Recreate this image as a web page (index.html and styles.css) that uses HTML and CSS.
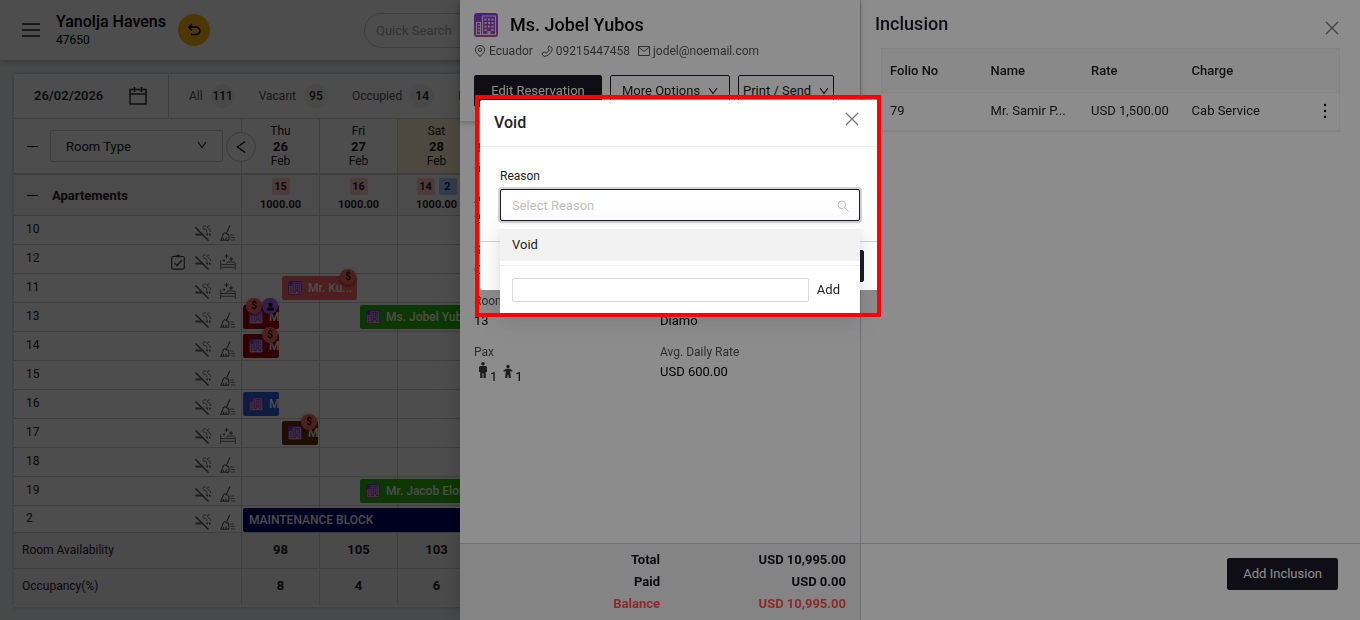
FILE: index.html
```html
<!DOCTYPE html>
<html lang="en">
<head>
  <meta charset="UTF-8">
  <meta name="viewport" content="width=device-width, initial-scale=1">
  <title>Yanolja Havens - Stay View</title>
  <link rel="stylesheet" href="styles.css">
</head>
<body>
  <!-- Shared icons -->
  <svg class="sprite" aria-hidden="true">
    <defs>
      <linearGradient id="purple" x1="0" y1="0" x2="0" y2="1">
        <stop offset="0" stop-color="#7a3ce0"/>
        <stop offset="1" stop-color="#b0489c"/>
      </linearGradient>
    </defs>
    <symbol id="i-building" viewBox="0 0 24 24">
      <rect width="24" height="24" rx="3" fill="url(#purple)"/>
      <path d="M8.500 21.500V3h13v18.500M2.500 21.500V9.500h4v12M2 21.500h20" fill="none" stroke="#e9d6f5" stroke-width="1.100"/>
      <path d="M10.500 5.500h2v2h-2zM14 5.500h2v2h-2zM17.500 5.500h2v2h-2zM10.500 9h2v2h-2zM14 9h2v2h-2zM17.500 9h2v2h-2zM10.500 12.500h2v2h-2zM14 12.500h2v2h-2zM17.500 12.500h2v2h-2zM10.500 16h2v2h-2zM17.500 16h2v2h-2zM13.500 18h3v3.500h-3zM4 11.500h1.500v1.500H4zM4 14.500h1.500V16H4zM4 17.500h1.500V19H4z" fill="#e9d6f5"/>
    </symbol>
    <symbol id="i-nosmoke" viewBox="0 0 16 16">
      <path d="M.5 2.500l13 13" fill="none" stroke="#444" stroke-width="1.200"/>
      <path d="M.5 8.500h7l2 2h-9zM10.500 8.500h2.500v2h-1zM14 8.500h1.500v2H14z" fill="#666"/>
      <path d="M11 1C8.500.5 7 2 8 3.500s3 .5 3.500 1.500-.5 2 1 2.500M14.500 1c-2 0-3 1-2 2s3 1 3 4" fill="none" stroke="#777" stroke-width="1"/>
    </symbol>
    <symbol id="i-broom" viewBox="0 0 16 16">
      <path d="M10 .5L6.500 8M4 7.500l4.500 2M3.500 8C3 11 2 13 .8 15.300h7.700c.6-2 .7-4 0-5.800M3.500 15v-2M6 15v-2.500" fill="none" stroke="#555" stroke-width="1.100"/>
      <path d="M10 10h4M10.800 12.500h4M10.800 15h4.500" stroke="#888" stroke-width="1.200"/>
    </symbol>
    <symbol id="i-bed" viewBox="0 0 16 16">
      <path d="M.7 6v9.800M.7 13.300h14.600v2.500M15.300 13.300V10q0-2-2-2H8q-1 0-1 1.300v1.200H.7M7 10.500h8" fill="none" stroke="#777" stroke-width="1"/>
      <path d="M6.500 0v4M4.500 2h4M11 3v4M9 5h4M4 5.500v2M3 6.500h2" stroke="#555" stroke-width="1"/>
    </symbol>
    <symbol id="i-task" viewBox="0 0 16 16">
      <rect x="1.700" y="2.500" width="12.600" height="12.600" rx="1.500" fill="none" stroke="#444" stroke-width="1.200"/>
      <path d="M5 2.500h6M6.500 1.300h3" stroke="#444" stroke-width="1.300"/>
      <path d="M4.500 9l2.500 2.500 5-5.500" fill="none" stroke="#444" stroke-width="1.300"/>
    </symbol>
    <symbol id="i-down" viewBox="0 0 10 10">
      <path d="M1 2l4 5.500L9 2" fill="none" stroke="currentColor" stroke-width="1.100"/>
    </symbol>
    <symbol id="i-close" viewBox="0 0 14 14">
      <path d="M1 1l12 12M13 1L1 13" fill="none" stroke="currentColor" stroke-width="1.300"/>
    </symbol>
    <symbol id="i-user" viewBox="0 0 10 10">
      <circle cx="5" cy="2.800" r="2.300"/>
      <path d="M4 4h2v1.500H4zM1 9.500V8q0-2 2-2h4q2 0 2 2v1.500z"/>
    </symbol>
  </svg>

  <div class="app">
    <header class="topbar">
      <button type="button" class="menu-btn" aria-label="Menu"><span></span><span></span><span></span></button>
      <div class="hotel">
        <h1>Yanolja Havens</h1>
        <p>47650</p>
      </div>
      <button type="button" class="back-btn" aria-label="Back">
        <svg width="14" height="14" viewBox="0 0 14 14"><path d="M5 1L2 4.200 5 7.500M2 4.200h7.200a3.600 3.600 0 0 1 0 7.300H4" fill="none" stroke="#000" stroke-width="1.700"/></svg>
      </button>
      <input type="text" class="quick-search" placeholder="Quick Search" aria-label="Quick Search">
    </header>

    <main class="board">
      <div class="filters">
        <div class="date-box">
          <span>26/02/2026</span>
          <svg width="18" height="18" viewBox="0 0 18 18"><path d="M1 2.500h16V17H1zM1 7h16M5.500 0v5M12.500 0v5" fill="none" stroke="#333" stroke-width="1.500"/></svg>
        </div>
        <div class="tab">All <b class="active">111</b></div>
        <div class="tab">Vacant <b>95</b></div>
        <div class="tab">Occupied <b>14</b></div>
        <div class="tab">Reserved</div>
      </div>

      <table class="calendar">
        <colgroup><col class="col-room"><col class="col-day"><col class="col-day"><col class="col-day"><col></colgroup>
        <thead>
          <tr class="days">
            <th>
              <div class="room-head">
                <i class="minus"></i>
                <div class="select-wrap">
                  <select aria-label="Room Type"><option>Room Type</option></select>
                  <svg width="10" height="10"><use href="#i-down"/></svg>
                </div>
              </div>
              <button type="button" class="prev-btn" aria-label="Previous">
                <svg width="10" height="14" viewBox="0 0 10 14"><path d="M9 1.500L1.500 7 9 12.500" fill="none" stroke="#000" stroke-width="1.400"/></svg>
              </button>
            </th>
            <th>Thu<b>26</b>Feb</th>
            <th>Fri<b>27</b>Feb</th>
            <th class="weekend">Sat<b>28</b>Feb</th>
            <th></th>
          </tr>
          <tr class="group">
            <th><div class="room-head"><i class="minus"></i><span>Apartements</span></div></th>
            <th><em>15</em><p>1000.00</p></th>
            <th><em>16</em><p>1000.00</p></th>
            <th><em>14</em><em class="blue">2</em><p>1000.00</p></th>
            <th></th>
          </tr>
        </thead>
        <tbody>
          <tr>
            <td><div class="room"><span>10</span><svg><use href="#i-nosmoke"/></svg><svg><use href="#i-broom"/></svg></div></td>
            <td></td><td></td><td></td><td></td>
          </tr>
          <tr>
            <td><div class="room"><span>12</span><svg><use href="#i-task"/></svg><svg><use href="#i-nosmoke"/></svg><svg><use href="#i-bed"/></svg></div></td>
            <td></td><td></td><td></td><td></td>
          </tr>
          <tr>
            <td><div class="room"><span>11</span><svg><use href="#i-nosmoke"/></svg><svg><use href="#i-bed"/></svg></div></td>
            <td><div class="booking mid day salmon"><svg><use href="#i-building"/></svg><span>Mr. Ku...</span><div class="marks"><i>$</i></div></div></td>
            <td></td><td></td><td></td>
          </tr>
          <tr>
            <td><div class="room"><span>13</span><svg><use href="#i-nosmoke"/></svg><svg><use href="#i-broom"/></svg></div></td>
            <td><div class="booking half maroon"><svg><use href="#i-building"/></svg><span>M</span><div class="marks"><i>$</i><i class="vip"><svg><use href="#i-user"/></svg></i></div></div></td>
            <td><div class="booking mid long green"><svg><use href="#i-building"/></svg><span>Ms. Jobel Yubos</span></div></td>
            <td></td><td></td>
          </tr>
          <tr>
            <td><div class="room"><span>14</span><svg><use href="#i-nosmoke"/></svg><svg><use href="#i-broom"/></svg></div></td>
            <td><div class="booking half maroon"><svg><use href="#i-building"/></svg><span>M</span><div class="marks"><i>$</i></div></div></td>
            <td></td><td></td><td></td>
          </tr>
          <tr>
            <td><div class="room"><span>15</span><svg><use href="#i-nosmoke"/></svg><svg><use href="#i-broom"/></svg></div></td>
            <td></td><td></td><td></td><td></td>
          </tr>
          <tr>
            <td><div class="room"><span>16</span><svg><use href="#i-nosmoke"/></svg><svg><use href="#i-broom"/></svg></div></td>
            <td><div class="booking half blue"><svg><use href="#i-building"/></svg><span>M</span></div></td>
            <td></td><td></td><td></td>
          </tr>
          <tr>
            <td><div class="room"><span>17</span><svg><use href="#i-nosmoke"/></svg><svg><use href="#i-bed"/></svg></div></td>
            <td><div class="booking mid half brown"><svg><use href="#i-building"/></svg><span>M</span><div class="marks"><i>$</i></div></div></td>
            <td></td><td></td><td></td>
          </tr>
          <tr>
            <td><div class="room"><span>18</span><svg><use href="#i-nosmoke"/></svg><svg><use href="#i-broom"/></svg></div></td>
            <td></td><td></td><td></td><td></td>
          </tr>
          <tr>
            <td><div class="room"><span>19</span><svg><use href="#i-nosmoke"/></svg><svg><use href="#i-broom"/></svg></div></td>
            <td></td>
            <td><div class="booking mid long green"><svg><use href="#i-building"/></svg><span>Mr. Jacob Elordi</span></div></td>
            <td></td><td></td>
          </tr>
          <tr class="last">
            <td><div class="room"><span>2</span><svg><use href="#i-nosmoke"/></svg><svg><use href="#i-broom"/></svg></div></td>
            <td><div class="booking block"><span>MAINTENANCE BLOCK</span></div></td>
            <td></td><td></td><td></td>
          </tr>
        </tbody>
        <tfoot>
          <tr><th>Room Availability</th><td>98</td><td>105</td><td>103</td><td></td></tr>
          <tr><th>Occupancy(%)</th><td>8</td><td>4</td><td>6</td><td></td></tr>
        </tfoot>
      </table>
    </main>
  </div>

  <div class="mask"></div>

  <!-- Reservation drawer -->
  <aside class="drawer">
    <section class="guest">
      <header class="guest-head">
        <h2><svg width="24" height="24"><use href="#i-building"/></svg>Ms. Jobel Yubos</h2>
        <ul class="contact">
          <li><svg width="12" height="12" viewBox="0 0 12 12"><path d="M6 11.300C3 8.800 1.300 7 1.300 4.800a4.700 4.300 0 0 1 9.400 0C10.700 7 9 8.800 6 11.300z" fill="none" stroke="currentColor"/><circle cx="6" cy="4.800" r="1.700" fill="none" stroke="currentColor"/></svg>Ecuador</li>
          <li><svg width="12" height="12" viewBox="0 0 12 12"><path d="M8.300.8l2.900 2.400c.2 4-4.200 8.200-8.200 8.200L.8 8.800l2.400-1.900 1.900 1.200c1.300-.6 2.300-1.600 3-3L6.800 3.200z" fill="none" stroke="currentColor"/></svg>09215447458</li>
          <li><svg width="12" height="12" viewBox="0 0 12 12"><path d="M.5 1.500h11v9H.5zM.5 2l5.500 4.500L11.500 2" fill="none" stroke="currentColor"/></svg>jodel@noemail.com</li>
        </ul>
        <div class="actions">
          <button type="button" class="btn primary edit">Edit Reservation</button>
          <button type="button" class="btn more">More Options <svg width="10" height="10"><use href="#i-down"/></svg></button>
          <button type="button" class="btn print">Print / Send <svg width="10" height="10"><use href="#i-down"/></svg></button>
        </div>
      </header>
      <dl class="details">
        <div><dt>Booking</dt><dd>6</dd></div>
        <div></div>
        <div><dt>Arrival</dt><dd>27</dd></div>
        <div></div>
        <div><dt>Status</dt><dd>Confirmed</dd></div>
        <div></div>
        <div><dt>Room</dt><dd>13</dd></div>
        <div><dt>Rate Type</dt><dd>Diamo</dd></div>
        <div>
          <dt>Pax</dt>
          <dd class="pax">
            <svg width="12" height="16" viewBox="0 0 12 16"><circle cx="6" cy="1.800" r="1.800"/><path d="M3.500 4h5Q10 4 10 5.500V10H8.800v6H6.500v-5h-1v5H3.200v-6H2V5.500Q2 4 3.500 4z"/></svg>1
            <svg width="12" height="16" viewBox="0 0 12 16"><circle cx="6" cy="4.500" r="1.700"/><path d="M4.300 6.800h3.400l3 1.700-.6 1.300-2-.8.800 7H6.800l-.4-3h-.8l-.4 3H3.100l.8-7-2 .8-.6-1.300z"/></svg>1
          </dd>
        </div>
        <div><dt>Avg. Daily Rate</dt><dd>USD 600.00</dd></div>
      </dl>
      <table class="totals">
        <tr><th>Total</th><td>USD 10,995.00</td></tr>
        <tr><th>Paid</th><td>USD 0.00</td></tr>
        <tr class="balance"><th>Balance</th><td>USD 10,995.00</td></tr>
      </table>
    </section>

    <section class="inclusion">
      <header class="inclusion-head">
        <h2>Inclusion</h2>
        <button type="button" class="icon-btn" aria-label="Close"><svg width="14" height="14"><use href="#i-close"/></svg></button>
      </header>
      <table class="folio">
        <thead>
          <tr><th>Folio No</th><th>Name</th><th>Rate</th><th>Charge</th><th></th></tr>
        </thead>
        <tbody>
          <tr>
            <td>79</td><td>Mr. Samir P...</td><td>USD 1,500.00</td><td>Cab Service</td>
            <td class="dots"><button type="button" class="icon-btn" aria-label="More"><svg width="4" height="16" viewBox="0 0 4 16"><circle cx="2" cy="2" r="1.200"/><circle cx="2" cy="8" r="1.200"/><circle cx="2" cy="14" r="1.200"/></svg></button></td>
          </tr>
        </tbody>
      </table>
      <footer class="inclusion-foot">
        <button type="button" class="btn primary">Add Inclusion</button>
      </footer>
    </section>
  </aside>

  <!-- Void modal -->
  <div class="mask modal-wrap">
    <div class="modal" role="dialog" aria-labelledby="voidTitle">
      <header class="modal-head">
        <h3 id="voidTitle">Void</h3>
        <button type="button" class="icon-btn" aria-label="Close"><svg width="14" height="14"><use href="#i-close"/></svg></button>
      </header>
      <div class="modal-body">
        <label for="reason">Reason</label>
        <div class="reason-box">
          <input type="text" id="reason" role="combobox" aria-expanded="true" placeholder="Select Reason">
          <svg width="12" height="12" viewBox="0 0 12 12"><circle cx="4.800" cy="4.800" r="3.800"/><path d="M7.600 7.600L11.500 11.500"/></svg>
        </div>
      </div>
      <footer class="modal-foot"><button type="button" class="btn primary" aria-label="Save"></button></footer>

      <div class="dropdown">
        <div class="option">Void</div>
        <div class="add-reason">
          <input type="text" aria-label="New reason">
          <button type="button">Add</button>
        </div>
      </div>
      <div class="highlight"></div>
    </div>
  </div>
</body>
</html>
```
FILE: styles.css
```css
* {
  box-sizing: border-box;
  margin: 0;
  padding: 0;
}
body {
  font-family: Roboto, Arial, sans-serif;
  font-size: 13px;
  line-height: 20px;
  color: #222;
  background: #f0f2f5;
  overflow: hidden;
}
button, input, select {
  font: inherit;
  color: inherit;
}
button {
  cursor: pointer;
}
ul {
  list-style: none;
}
.sprite {
  position: absolute;
  width: 0;
  height: 0;
}
.icon-btn {
  display: flex;
  background: none;
  border: none;
  color: #777;
}
.app {
  isolation: isolate;
}

/* Top bar */
.topbar {
  display: flex;
  align-items: center;
  height: 60px;
  padding-left: 22px;
  background: #fff;
  box-shadow: 0 2px 6px rgba(0,0,0,0.25);
}
.menu-btn {
  display: flex;
  flex-direction: column;
  gap: 4px;
  width: 18px;
  margin-right: 16px;
  background: none;
  border: none;
}
.menu-btn span {
  width: 18px;
  height: 2px;
  background: #555;
}
.hotel h1 {
  font-size: 16px;
  font-weight: 500;
  color: #000;
}
.hotel p {
  font-size: 12px;
  line-height: 16px;
  color: #000;
}
.back-btn {
  display: flex;
  align-items: center;
  justify-content: center;
  width: 32px;
  height: 32px;
  margin-left: 12px;
  border: none;
  border-radius: 50%;
  background: #fdb813;
}
.quick-search {
  width: 200px;
  height: 35px;
  margin-left: 154px;
  padding: 0 11px;
  border: 1px solid #d0d0d0;
  border-radius: 18px;
  background: #fff;
}
.quick-search::placeholder {
  color: #aaa;
}

/* Room calendar */
.board {
  margin: 14px;
  background: #fff;
  box-shadow: 0 0 4px rgba(0,0,0,0.25);
  padding-bottom: 2px;
}
.filters {
  display: flex;
  align-items: center;
  gap: 24px;
  height: 45px;
  border-bottom: 1px solid #d4d4d4;
  overflow: hidden;
}
.date-box {
  display: flex;
  align-items: center;
  justify-content: space-between;
  width: 155px;
  height: 44px;
  margin-right: -4px;
  padding: 0 21px 0 20px;
  border-right: 1px solid #d4d4d4;
  font-weight: 500;
}
.tab {
  display: flex;
  align-items: center;
  gap: 8px;
  font-size: 12px;
  color: #555;
}
.tab b {
  width: 24px;
  border-radius: 50%;
  background: #f2f2f2;
  line-height: 24px;
  text-align: center;
  font-weight: 500;
  color: #222;
}
.calendar {
  width: 100%;
  table-layout: fixed;
  border-collapse: separate;
  border-spacing: 0;
}
.col-room {
  width: 228px;
}
.col-day {
  width: 78px;
}
.calendar th,
.calendar td {
  position: relative;
  border-right: 1px solid #d4d4d4;
  border-bottom: 1px solid #d4d4d4;
}
.days th {
  height: 56px;
  line-height: 15px;
  font-size: 12px;
  font-weight: 400;
  border-bottom-width: 2px;
}
.days b {
  display: block;
  font-size: 13px;
}
.days .weekend {
  background: #fff3d6;
}
.room-head {
  display: flex;
  align-items: center;
  gap: 12px;
  padding: 0 18px 0 13px;
  font-size: 13px;
  font-weight: 700;
}
.minus {
  width: 11px;
  height: 1px;
  background: #000;
}
.group .room-head {
  gap: 14px;
}
.select-wrap {
  position: relative;
  flex: 1;
}
.select-wrap select {
  appearance: none;
  width: 100%;
  height: 32px;
  padding: 0 15px;
  border: 1px solid #d0d0d0;
  border-radius: 2px;
  background: #fff;
  font-weight: 400;
}
.select-wrap svg {
  position: absolute;
  right: 16px;
  top: 10px;
}
.prev-btn {
  position: absolute;
  z-index: 1;
  right: -15px;
  top: 13px;
  display: flex;
  align-items: center;
  justify-content: center;
  width: 30px;
  height: 30px;
  border: 1px solid #c8c8c8;
  border-radius: 50%;
  background: #fff;
}
.group th {
  height: 41px;
  background: #fafafa;
  font-size: 11px;
  line-height: 17px;
}
.group p {
  padding-top: 1px;
}
.group em {
  display: inline-block;
  width: 18px;
  margin: 0 2px;
  border-radius: 2px;
  background: #ffc9c9;
  font-style: normal;
}
.group em.blue {
  background: #a9ccff;
}
.calendar tbody td {
  height: 29px;
}
.calendar tbody .last td {
  height: 27px;
}
.room {
  display: flex;
  gap: 9px;
  height: 26px;
  padding: 0 5px 2px 12px;
  font-size: 12px;
}
.room span {
  flex: 1;
  line-height: 25px;
}
.room svg {
  align-self: flex-end;
  width: 16px;
  height: 16px;
}
.booking {
  position: absolute;
  z-index: 1;
  left: 1px;
  top: 2px;
  display: flex;
  align-items: center;
  gap: 6px;
  height: 24px;
  padding-left: 6px;
  border-radius: 2px;
  color: #fff;
  font-size: 12px;
  font-weight: 500;
}
.booking.mid {
  left: 40px;
}
.booking.half {
  width: 36px;
}
.booking.day {
  width: 75px;
}
.booking.long {
  width: 154px;
}
.booking > svg {
  flex: none;
  width: 14px;
  height: 14px;
}
.booking > span {
  overflow: hidden;
  white-space: nowrap;
}
.booking.salmon { background: #ff6b6b; }
.booking.maroon { background: #a80000; }
.booking.green { background: #2bb800; }
.booking.blue { background: #2f5fe0; }
.booking.brown { background: #6b3300; }
.booking.block {
  width: 312px;
  background: #00006e;
}
.marks {
  position: absolute;
  right: 1px;
  top: -7px;
  display: flex;
}
.marks i {
  display: flex;
  align-items: center;
  justify-content: center;
  width: 16px;
  height: 16px;
  border-radius: 50%;
  background: #ff6b6b;
  box-shadow: 0 1px 3px rgba(0,0,0,0.5);
  color: #000;
  font-size: 10px;
  font-style: normal;
}
.marks .vip {
  background: #a966ff;
}
.marks svg {
  width: 9px;
  height: 9px;
}
.calendar tfoot th,
.calendar tfoot td {
  height: 36px;
  padding-bottom: 2px;
  background: #f7f7f7;
  text-align: center;
  font-weight: 700;
}
.calendar tfoot th {
  padding-left: 8px;
  text-align: left;
  font-size: 12px;
  font-weight: 400;
}
.calendar tfoot tr:last-child > * {
  border-bottom: none;
}

/* Overlays */
.mask {
  position: fixed;
  inset: 0;
  background: rgba(0,0,0,0.45);
}
.drawer {
  position: fixed;
  top: 0;
  right: 0;
  bottom: 0;
  display: flex;
  width: 900px;
  background: #fff;
  box-shadow: -6px 0 16px rgba(0,0,0,0.1);
}
.btn {
  height: 32px;
  padding: 0 15px;
  border: 1px solid #1d1b2a;
  border-radius: 2px;
  background: #fff;
  color: #1d1b2a;
}
.btn.primary {
  background: #1d1b2a;
  color: #fff;
}

/* Guest column */
.guest {
  display: flex;
  flex-direction: column;
  width: 401px;
  border-right: 1px solid #ccccd6;
}
.guest-head {
  padding: 13px 14px 14px;
  box-shadow: 0 2px 6px rgba(0,0,0,0.25);
}
.guest-head h2 {
  display: flex;
  align-items: center;
  gap: 12px;
  line-height: 24px;
  font-size: 18px;
  font-weight: 500;
  color: #000;
}
.contact {
  display: flex;
  gap: 8px;
  padding-top: 4px;
  font-size: 12px;
  color: #555;
}
.contact li {
  display: flex;
  align-items: center;
  gap: 3px;
}
.actions {
  display: flex;
  gap: 8px;
  padding-top: 14px;
}
.actions .btn {
  display: flex;
  align-items: center;
  justify-content: space-between;
  white-space: nowrap;
}
.actions .edit {
  width: 128px;
  justify-content: center;
}
.actions .more {
  width: 120px;
  padding: 0 11px;
}
.actions .print {
  width: 96px;
  padding: 0 4px;
}
.details {
  display: grid;
  grid-template-columns: 186px 1fr;
  grid-auto-rows: 38px;
  row-gap: 13px;
  flex: 1;
  padding: 18px 14px;
}
.details dt {
  line-height: 19px;
  font-size: 12px;
  color: #555;
}
.details dd {
  color: #000;
}
.details .pax {
  display: flex;
  align-items: flex-end;
  height: 24px;
  padding-left: 3px;
  gap: 1px;
  line-height: 18px;
}
.pax svg {
  align-self: flex-start;
  fill: #333;
}
.pax svg + svg {
  margin-left: 4px;
}
.totals {
  width: 100%;
  height: 77px;
  padding: 5px 14px;
  border-top: 1px solid #ccccd6;
  border-spacing: 0;
  background: #f0f0f0;
  color: #15151c;
  font-weight: 700;
  text-align: right;
}
.totals th {
  width: 186px;
}
.totals td,
.totals th {
  line-height: 22px;
}
.totals .balance {
  color: #ff4d4f;
}

/* Inclusion column */
.inclusion {
  display: flex;
  flex-direction: column;
  flex: 1;
}
.inclusion-head {
  display: flex;
  align-items: center;
  justify-content: space-between;
  height: 48px;
  padding: 0 21px 0 14px;
}
.inclusion-head h2 {
  font-size: 18px;
  font-weight: 500;
  color: #1d1b2a;
}
.inclusion-head .icon-btn {
  padding-top: 8px;
}
.folio {
  margin: 0 20px;
  table-layout: fixed;
  border: 1px solid #f0f0f0;
  border-spacing: 0;
  text-align: left;
}
.folio th,
.folio td {
  width: 22%;
  padding-left: 8px;
  border-bottom: 1px solid #f0f0f0;
}
.folio th {
  height: 44px;
  background: #fafafa;
  font-weight: 500;
}
.folio td {
  height: 38px;
  padding-bottom: 2px;
}
.folio th:last-child,
.folio td:last-child {
  width: 12%;
}
.dots .icon-btn {
  margin: 0 12px 0 auto;
}
.inclusion-foot {
  display: flex;
  align-items: flex-start;
  justify-content: flex-end;
  height: 77px;
  margin-top: auto;
  padding: 14px 22px;
  border-top: 1px solid #ccccd6;
}

/* Void modal */
.modal-wrap {
  display: flex;
  justify-content: center;
  align-items: flex-start;
  padding-top: 100px;
}
.modal {
  position: relative;
  width: 400px;
  border-radius: 2px;
  background: #fff;
}
.modal-head {
  display: flex;
  justify-content: space-between;
  height: 47px;
  padding: 12px 21px 0 14px;
  border-bottom: 1px solid #f0f0f0;
}
.modal-head h3 {
  line-height: 22px;
  font-size: 16px;
  font-weight: 500;
}
.modal-head .icon-btn {
  height: 14px;
}
.modal-body {
  height: 94px;
  padding: 19px 20px;
}
.modal-body label {
  display: block;
  margin-bottom: 3px;
  font-size: 12px;
}
.reason-box {
  position: relative;
}
.reason-box input {
  width: 100%;
  height: 32px;
  padding: 0 11px;
  border: 1px solid #1d1b2a;
  border-radius: 2px;
  box-shadow: 0 0 0 2px rgba(29,27,42,0.2);
  outline: none;
}
.reason-box input::placeholder {
  color: #bfbfbf;
}
.reason-box svg {
  position: absolute;
  right: 11px;
  top: 11px;
  fill: none;
  stroke: #bbb;
}
.modal-foot {
  display: flex;
  justify-content: flex-end;
  height: 49px;
  padding: 8px 16px;
  border-top: 1px solid #d4d4d4;
}
.modal-foot .btn {
  width: 64px;
}
.dropdown {
  position: absolute;
  left: 20px;
  right: 20px;
  top: 125px;
  padding-top: 4px;
  border-radius: 2px;
  background: #fff;
  box-shadow: 0 3px 6px -4px rgba(0,0,0,0.12), 0 6px 16px rgba(0,0,0,0.08), 0 9px 28px 8px rgba(0,0,0,0.05);
}
.option {
  padding: 6px 12px;
  background: #f2f2f2;
}
.add-reason {
  display: flex;
  align-items: center;
  gap: 8px;
  margin-top: 4px;
  padding: 12px 20px 12px 12px;
  border-top: 1px solid #f0f0f0;
}
.add-reason input {
  flex: 1;
  height: 24px;
  border: 1px solid #d9d9d9;
  border-radius: 2px;
}
.add-reason button {
  background: none;
  border: none;
}
.highlight {
  position: absolute;
  left: -5px;
  right: -1px;
  top: -5px;
  height: 222px;
  border: 4px solid #f00;
  border-radius: 1px;
}
```
